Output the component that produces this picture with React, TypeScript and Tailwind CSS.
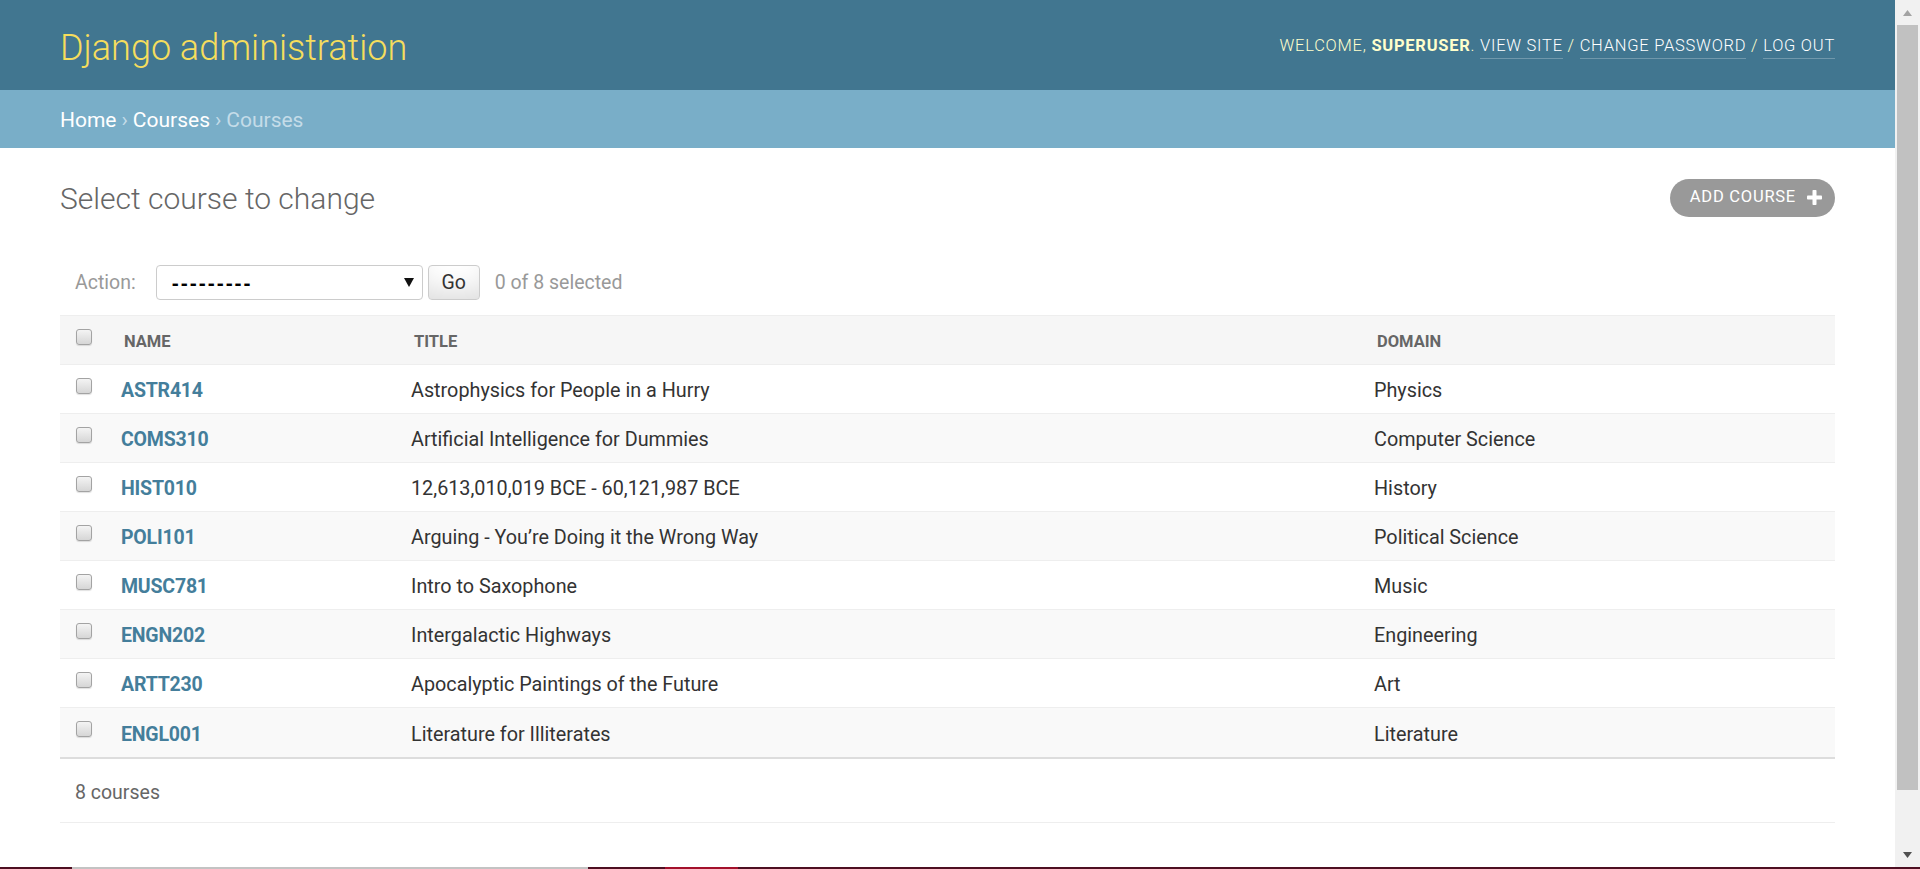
import React from "react";

const courses = [
  { name: "ASTR414", title: "Astrophysics for People in a Hurry", domain: "Physics" },
  { name: "COMS310", title: "Artificial Intelligence for Dummies", domain: "Computer Science" },
  { name: "HIST010", title: "12,613,010,019 BCE - 60,121,987 BCE", domain: "History" },
  { name: "POLI101", title: "Arguing - You’re Doing it the Wrong Way", domain: "Political Science" },
  { name: "MUSC781", title: "Intro to Saxophone", domain: "Music" },
  { name: "ENGN202", title: "Intergalactic Highways", domain: "Engineering" },
  { name: "ARTT230", title: "Apocalyptic Paintings of the Future", domain: "Art" },
  { name: "ENGL001", title: "Literature for Illiterates", domain: "Literature" },
];

function Checkbox() {
  return (
    <span className="block w-[16px] h-[16px] rounded-[3px] border border-[#a3a3a3] bg-gradient-to-b from-[#f4f4f4] to-[#d6d6d6] shadow-[0_1px_1px_rgba(0,0,0,0.12)]" />
  );
}

function PlusIcon() {
  return (
    <svg width="15" height="15" viewBox="0 0 15 15" className="shrink-0">
      <rect x="5.5" y="0" width="4" height="15" rx="0.8" fill="#fff" />
      <rect x="0" y="5.5" width="15" height="4" rx="0.8" fill="#fff" />
    </svg>
  );
}

function Scrollbar() {
  return (
    <div className="w-[25px] h-full bg-[#f1f1f1] flex flex-col items-center shrink-0">
      <div className="h-[25px] w-full flex items-center justify-center">
        <svg width="9" height="6" viewBox="0 0 9 6">
          <polygon points="4.5,0 9,6 0,6" fill="#a3a3a3" />
        </svg>
      </div>
      <div className="w-[21px] h-[765px] bg-[#c1c1c1]" />
      <div className="flex-1 w-full flex items-end justify-center pb-[9px]">
        <svg width="9" height="6" viewBox="0 0 9 6">
          <polygon points="0,0 9,0 4.5,6" fill="#505050" />
        </svg>
      </div>
    </div>
  );
}

export default function App() {
  return (
    <div className="w-[1920px] h-[869px] overflow-hidden flex flex-col font-['Roboto','Liberation_Sans',sans-serif] bg-white">
      <div className="flex h-[867px]">
        <div className="flex-1 min-w-0">
          {/* header */}
          <div className="h-[90px] bg-[#417690] px-[60px] flex items-center justify-between">
            <h1 className="text-[36px] font-light text-[#f5dd5d] leading-none pt-[5px]">
              Django administration
            </h1>
            <div className="text-[16.5px] font-light uppercase tracking-[0.75px] text-[#ffffcc] leading-[21px]">
              Welcome, <strong className="font-bold">superuser</strong>.{" "}
              <a className="text-white border-b border-white/25 pb-[3px]">View site</a>
              {" / "}
              <a className="text-white border-b border-white/25 pb-[3px]">Change password</a>
              {" / "}
              <a className="text-white border-b border-white/25 pb-[3px]">Log out</a>
            </div>
          </div>

          {/* breadcrumbs */}
          <div className="h-[58px] bg-[#79aec8] px-[60px] pt-[4px] flex items-center text-[21px] text-[#c4dce8]">
            <a className="text-white">Home</a>
            <span className="mx-[5px]">›</span>
            <a className="text-white">Courses</a>
            <span className="mx-[5px]">›</span>
            <span>Courses</span>
          </div>

          {/* content */}
          <div className="px-[60px] pt-[30px]">
            <div className="h-[39px] flex items-center justify-between">
              <h1 className="text-[30px] font-light text-[#666] leading-none pt-[2px]">
                Select course to change
              </h1>
              <a className="h-[38px] rounded-[19px] bg-[#999] pl-[20px] pr-[13px] flex items-center gap-[11px] text-white text-[16.5px] uppercase tracking-[0.75px]">
                Add course
                <PlusIcon />
              </a>
            </div>

            {/* actions */}
            <div className="mt-[32px] h-[66px] px-[15px] flex items-center text-[19.5px] text-[#999]">
              <span className="pt-[2px]">Action:</span>
              <div className="ml-[20px] w-[267px] h-[35px] border border-[#ccc] rounded-[4px] bg-white flex items-center justify-between pl-[15px] pr-[8px]">
                <span className="font-['Liberation_Sans',sans-serif] text-[21px] tracking-[2px] text-black font-bold leading-none">
                  ---------
                </span>
                <svg width="10" height="9" viewBox="0 0 10 9">
                  <polygon points="0,0 10,0 5,9" fill="#111" />
                </svg>
              </div>
              <button className="ml-[5px] h-[35px] w-[52px] border border-[#ccc] rounded-[4px] bg-white shadow-[inset_0_-22px_30px_-15px_rgba(0,0,0,0.15)] text-[19.5px] text-[#333] pt-[2px]">
                Go
              </button>
              <span className="ml-[15px] pt-[1px]">0 of 8 selected</span>
            </div>

            {/* table */}
            <div className="border-t border-[#eee]">
              <div className="grid grid-cols-[49px_290px_963px_1fr] h-[49px] bg-[#f6f6f6] border-b border-[#eee] text-[16.5px] font-bold text-[#666] uppercase">
                <div className="pl-[16px] pt-[13px]">
                  <Checkbox />
                </div>
                <div className="pl-[15px] pt-[4px] flex items-center">Name</div>
                <div className="pl-[15px] pt-[4px] flex items-center">Title</div>
                <div className="pl-[15px] pt-[4px] flex items-center">Domain</div>
              </div>
              {courses.map((c, i) => (
                <div
                  key={c.name}
                  className={
                    "grid grid-cols-[49px_290px_963px_1fr] h-[49px] text-[19.8px] text-[#333] " +
                    (i === courses.length - 1 ? "" : "border-b border-[#eee] ") +
                    (i % 2 === 1 ? "bg-[#f9f9f9]" : "bg-white")
                  }
                >
                  <div className="pl-[16px] pt-[13px]">
                    <Checkbox />
                  </div>
                  <div className="pl-[12px] pt-[4px] flex items-center">
                    <a className="font-bold text-[#447e9b] text-[19.5px] tracking-[-0.2px]">{c.name}</a>
                  </div>
                  <div className="pl-[12px] pt-[4px] flex items-center">{c.title}</div>
                  <div className="pl-[12px] pt-[4px] flex items-center">{c.domain}</div>
                </div>
              ))}
            </div>

            {/* paginator */}
            <div className="border-t-2 border-[#ddd] border-b border-b-[#eee] h-[66px] pt-[4px] flex items-center px-[15px] text-[19.5px] text-[#666]">
              8 courses
            </div>
          </div>
        </div>
        <Scrollbar />
      </div>
      <div className="h-[2px] flex bg-[#4d0f22]">
        <div className="w-[72px]" />
        <div className="w-[516px] bg-[#c3c3c3]" />
        <div className="w-[77px]" />
        <div className="w-[73px] bg-[#a3102b]" />
      </div>
    </div>
  );
}
